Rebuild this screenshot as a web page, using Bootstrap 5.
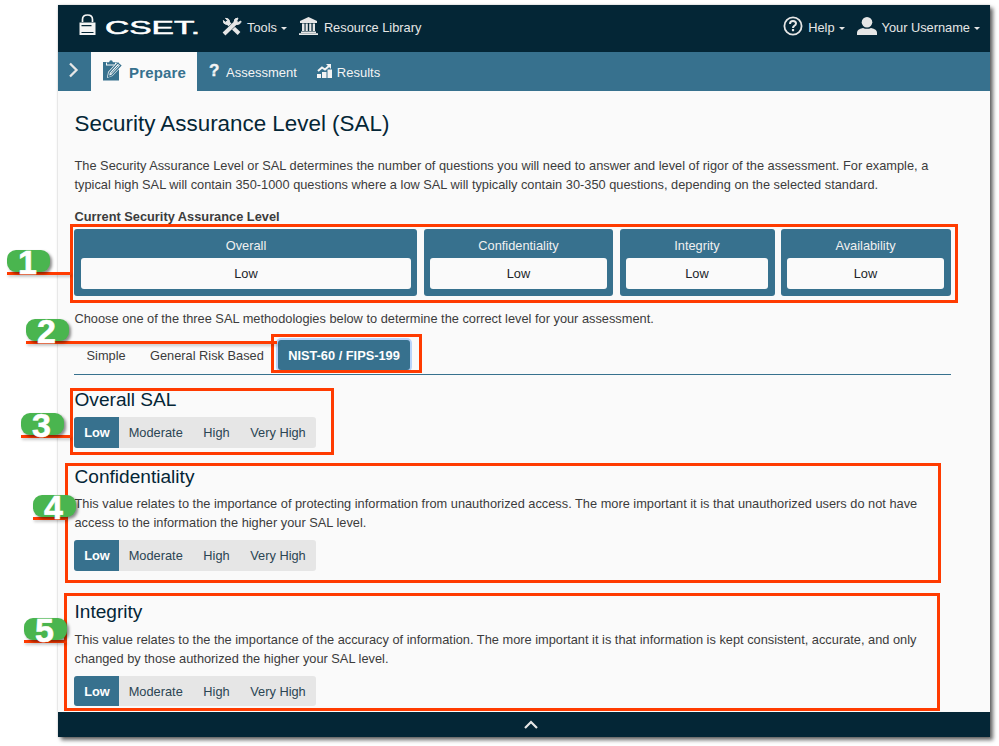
<!DOCTYPE html>
<html lang="en">
<head>
<meta charset="utf-8">
<meta name="viewport" content="width=device-width, initial-scale=1">
<title>CSET - Security Assurance Level</title>
<link rel="stylesheet" href="https://cdn.jsdelivr.net/npm/bootstrap@5.3.0/dist/css/bootstrap.min.css">
<style>
body{font-family:"Liberation Sans",Arial,sans-serif;font-size:12.8px;line-height:19px;color:#3c3c3c;background:#fff;width:999px;height:746px;overflow:hidden;position:relative}
svg{display:block;flex:none}
.app-window{width:932px;height:732px;margin:5px 0 0 58px;background:#fafafa;box-shadow:3px 3px 4px rgba(0,0,0,.6),0 0 2px rgba(0,0,0,.2)}
.top-bar{height:47px;background:#042636;color:#e6e6e6;padding:0 10px 3px 20px}
.top-item>svg{margin-top:-2px;margin-right:5px}
.item-tools{margin-left:20px}
.item-library{margin-left:12px}
.item-library>svg{margin-right:6px}
.item-user{margin-left:12px}
.item-user>svg{margin-top:-3px}
.lock-logo{margin:-4px 0 0 1px}
.caret-down{width:6px;height:3px;border:3.5px solid transparent;border-top-color:#e6e6e6;border-bottom:0;margin-left:4px;margin-top:3px}
.step-bar{height:39px;background:#37718e;color:#f4f4f4;font-size:13px}
.step-toggle{width:33px;padding:0 0 4px 10px}
.step-active{width:106px;background:#fafafa;color:#37718e;font-size:15px;font-weight:700;letter-spacing:.15px;padding:2px 0 0 12px}
.step-active svg{margin-top:-5px;margin-right:6px}
.step-item{padding-top:1px}
.step-item>svg{margin-top:-3px;margin-right:5px}
.step-assess{margin-left:12px;margin-right:20px}
.step-assess b{font-size:17px;width:17px;margin-top:-3px;-webkit-text-stroke:.4px #f4f4f4}
.page-body{height:621px;padding:0 39px 0 16px;overflow:hidden}
.page-body p{padding-left:.5px;margin:0}
.page-title{font-size:22.4px;line-height:30px;color:#042636;margin:18px 0 17px .5px}
.page-body .gap-above{margin-top:13px}
.sub-title{font-size:19.1px;line-height:24px;color:#042636;margin:13px 0 5px;padding-left:.5px}
.sub-title.sub-conf{margin-top:17px}
.sub-title.sub-integ{margin:29px 0 6px}
.level-grid{display:grid;grid-template-columns:343px 189px 155px 170px;column-gap:7px;width:877px;height:67px;margin-top:3px}
.level-box{background:#37718e;color:#f0f0f0;border-radius:3px;padding:7px 6px;text-align:center}
.level-grid>:first-child{padding-left:7px}
.level-grid>:nth-child(3){padding-right:7px}
.level-grid>:last-child{padding-right:7px;margin-left:-1px;margin-right:1px}
.level-box>div:first-child{height:22px}
.level-value{background:#fafafa;color:#212529;border-radius:3px;height:31px;line-height:31px}
.method-tabs{height:47px;padding-top:12px;border-bottom:1px solid #37718e}
.method-tabs span{line-height:31px;white-space:nowrap}
.tab-simple{margin-left:12.5px;width:63.5px}
.tab-risk{width:128px}
.tab-on{background:#37718e;color:#fff;font-weight:700;border-radius:3px;width:132px;height:30px;text-align:center;box-shadow:0 0 0 2px #b9d4fb}
.level-group{width:242px;height:31px;border-radius:3px;background:#e6e6e6;color:#2b4553;line-height:31px;overflow:hidden;white-space:nowrap}
p+.level-group{margin-top:8px}
.level-group.short-group{height:30px}
.level-group b{width:45px;flex:none;background:#37718e;color:#fff;text-align:center;padding-left:1px}
.level-group span{flex:none;margin-left:9.7px;margin-right:10.9px}
.foot-bar{height:25px;background:#042636;padding-left:13px}
.note-frame{position:absolute;border:3px solid #ff3b00}
.note-line{position:absolute;height:3px;background:#ff3b00;box-shadow:1px 2px 3px rgba(0,0,0,.2)}
.note-tag{position:absolute;width:43px;height:22px;border-radius:9px;background:#4ab54f;box-shadow:2px 2px 3px rgba(0,0,0,.45);color:#fff;font:700 34px/25px "Liberation Sans",Arial,sans-serif;text-align:center;padding-right:2px;-webkit-text-stroke:.6px #fff}
.frame-1{left:70px;top:224px;width:888px;height:79px}
.frame-2{left:271px;top:334px;width:151px;height:39px}
.frame-3{left:70px;top:388px;width:264px;height:67px}
.frame-4{left:65px;top:463px;width:876px;height:120px}
.frame-5{left:64px;top:593px;width:876px;height:118px}
.line-1{left:7px;top:272px;width:64px}.tag-1{left:7px;top:250px}
.line-2{left:26px;top:341px;width:251px}.tag-2{left:26px;top:319px}
.line-3{left:21px;top:435px;width:50px}.tag-3{left:21px;top:413px}
.line-4{left:33px;top:517px;width:34px}.tag-4{left:33px;top:495px}
.line-5{left:24px;top:640px;width:42px}.tag-5{left:24px;top:618px}
</style>
<script src="https://cdn.jsdelivr.net/npm/bootstrap@5.3.0/dist/js/bootstrap.bundle.min.js"></script>
</head>
<body>
<div class="app-window d-flex flex-column">
  <header class="top-bar d-flex align-items-center">
    <svg class="lock-logo" width="17" height="22" viewBox="0 0 17 22" fill="none" stroke="#f4f4f4"><path d="M3.500 8V5.500Q3.500 1 8.500 1t5 4.500V8" stroke-width="1.700"/><path d="M.500 8.500h16V21H.500z" fill="#f4f4f4" stroke="none"/><path d="M2.500 11.700h10M2.500 18.500h12" stroke="#042636" stroke-width="1.200"/></svg>
    <svg class="ms-2" width="98" height="28" viewBox="0 0 98 28"><text x="1" y="21" font-family="Liberation Sans" font-size="17.500" textLength="95" lengthAdjust="spacingAndGlyphs" fill="#fff" stroke="#fff" stroke-width=".5">CSET.</text></svg>
    <div class="top-item item-tools d-flex align-items-center">
      <svg width="20" height="19" viewBox="0 0 20 19" fill="none" stroke="#e6e6e6"><path d="M5.500 5.500 17 16.500" stroke-width="4"/><path d="M1.300 3.500Q1 7 4.500 7.500 8 7 7.500 4 7 1.200 3.500 1.300l2 2-1.800 2z" fill="#e6e6e6" stroke-width="1"/><path d="m3.500 15.500 9-8.500" stroke="#042636" stroke-width="5"/><path d="M2 17 14.500 5" stroke-width="4"/><path d="M16 1q-4 0-4 4l2.500 2.500Q19 7.500 19 4l-3 1.500-1.300-1.500z" fill="#e6e6e6" stroke-width="1"/></svg>
      <span>Tools</span><i class="caret-down"></i>
    </div>
    <div class="top-item item-library d-flex align-items-center">
      <svg width="19" height="18" viewBox="0 0 19 18" fill="#e6e6e6"><path d="M9.500 0 18 4v2H1V4zM3 6.500h2.500V14H3zm3.600 0h2.200V14H6.600zm3.600 0h2.200V14h-2.200zm3.500 0H16V14h-2.300zM2 14.500h15V16H2zM0 16.300h19V18H0z"/></svg>
      <span>Resource Library</span>
    </div>
    <div class="top-item d-flex align-items-center ms-auto">
      <svg width="20" height="20" viewBox="0 0 20 20" fill="none" stroke="#e6e6e6"><circle cx="10" cy="10" r="8.600" stroke-width="1.800"/><path d="M7 8q0-3 3-3t3 2.600q0 1.400-1.800 2.400-1.200.600-1.200 2" stroke-width="2"/><path d="M10 13v2.200" stroke-width="2.200"/></svg>
      <span>Help</span><i class="caret-down"></i>
    </div>
    <div class="top-item item-user d-flex align-items-center">
      <svg width="20" height="18" viewBox="0 0 20 19" preserveAspectRatio="none" fill="#e6e6e6"><ellipse cx="10" cy="5.500" rx="5.300" ry="5.500"/><path d="M0 19v-2.500q0-4 6-5 4 2 8 0 6 1 6 5V19z"/></svg>
      <span>Your Username</span><i class="caret-down"></i>
    </div>
  </header>
  <nav class="step-bar d-flex">
    <div class="step-toggle d-flex align-items-center"><svg width="12" height="16" viewBox="0 0 12 16" fill="none" stroke="#e6e6e6" stroke-width="2.300"><path d="m2 1.500 6.500 6.500L2 14.500"/></svg></div>
    <div class="step-active d-flex align-items-center">
      <svg width="20" height="21" viewBox="0 0 20 21"><path d="M0 2h16v18.500H0z" fill="#37718e"/><path d="M3 2.500h10v3H3z" fill="#fafafa"/><path d="M4 4.500V2.500h2Q6.500.300 8 .300t2 2.200h2v2z" fill="#37718e"/><path d="m4 18 1-6L14.500 1.500l5 4L9.500 16z" fill="#fafafa"/><path d="m5.500 16.500.800-4 8.500-9.500 3 2.500L9 15z" fill="none" stroke="#37718e" stroke-width="1.200"/><path d="m8 13.500 7.500-8" stroke="#37718e"/></svg>
      <span>Prepare</span>
    </div>
    <div class="step-item step-assess d-flex align-items-center"><b>?</b><span>Assessment</span></div>
    <div class="step-item d-flex align-items-center">
      <svg width="15" height="14" viewBox="0 0 15 14" fill="#f4f4f4"><path d="M0 10h4v4H0zm5-2h4.500v6H5zm5.500-2.500H15V14h-4.500z"/><path d="m1 7 4-3.500 3 2L12 2" fill="none" stroke="#f4f4f4" stroke-width="2"/><path d="M9 0h5v5z"/></svg>
      <span>Results</span>
    </div>
  </nav>
  <main class="page-body">
    <h1 class="page-title fw-normal">Security Assurance Level (SAL)</h1>
    <p class="text-nowrap">The Security Assurance Level or SAL determines the number of questions you will need to answer and level of rigor of the assessment. For example, a<br>typical high SAL will contain 350-1000 questions where a low SAL will typically contain 30-350 questions, depending on the selected standard.</p>
    <p class="fw-bold gap-above">Current Security Assurance Level</p>
    <div class="level-grid">
      <div class="level-box"><div>Overall</div><div class="level-value">Low</div></div>
      <div class="level-box"><div>Confidentiality</div><div class="level-value">Low</div></div>
      <div class="level-box"><div>Integrity</div><div class="level-value">Low</div></div>
      <div class="level-box"><div>Availability</div><div class="level-value">Low</div></div>
    </div>
    <p class="gap-above">Choose one of the three SAL methodologies below to determine the correct level for your assessment.</p>
    <div class="method-tabs d-flex"><span class="tab-simple">Simple</span><span class="tab-risk">General Risk Based</span><span class="tab-on">NIST-60 / FIPS-199</span></div>
    <h2 class="sub-title fw-normal">Overall SAL</h2>
    <div class="level-group d-flex"><b>Low</b><span>Moderate</span><span>High</span><span>Very High</span></div>
    <h2 class="sub-title sub-conf fw-normal">Confidentiality</h2>
    <p class="text-nowrap">This value relates to the importance of protecting information from unauthorized access. The more important it is that unauthorized users do not have<br>access to the information the higher your SAL level.</p>
    <div class="level-group d-flex"><b>Low</b><span>Moderate</span><span>High</span><span>Very High</span></div>
    <h2 class="sub-title sub-integ fw-normal">Integrity</h2>
    <p class="text-nowrap">This value relates to the the importance of the accuracy of information. The more important it is that information is kept consistent, accurate, and only<br>changed by those authorized the higher your SAL level.</p>
    <div class="level-group short-group d-flex"><b>Low</b><span>Moderate</span><span>High</span><span>Very High</span></div>
  </main>
  <footer class="foot-bar d-flex align-items-center justify-content-center"><svg width="14" height="9" viewBox="0 0 14 9" fill="none" stroke="#e6e6e6" stroke-width="2.200"><path d="m1 8 6-6 6 6"/></svg></footer>
</div>

<!-- numbered callouts over the window -->
<div class="note-frame frame-1"></div>
<div class="note-frame frame-2"></div>
<div class="note-frame frame-3"></div>
<div class="note-frame frame-4"></div>
<div class="note-frame frame-5"></div>
<div class="note-line line-1"></div><div class="note-tag tag-1">1</div>
<div class="note-line line-2"></div><div class="note-tag tag-2">2</div>
<div class="note-line line-3"></div><div class="note-tag tag-3">3</div>
<div class="note-line line-4"></div><div class="note-tag tag-4">4</div>
<div class="note-line line-5"></div><div class="note-tag tag-5">5</div>
</body>
</html>
